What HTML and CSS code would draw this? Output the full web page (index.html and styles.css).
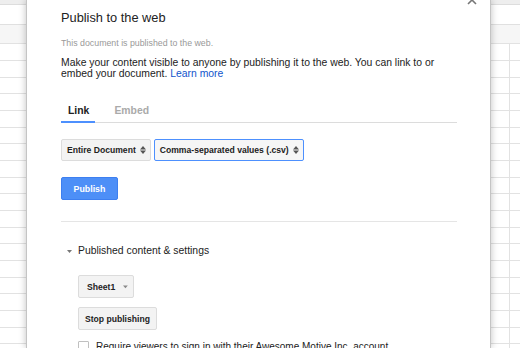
FILE: index.html
```html
<!DOCTYPE html>
<html>
<head>
<meta charset="utf-8">
<link rel="stylesheet" href="styles.css">
</head>
<body>
<div class="dialog">
  <button class="close" aria-label="Close">
    <svg width="10" height="10" viewBox="0 0 10 10"><path d="M1 1L9 9M9 1L1 9" stroke="#777" stroke-width="1.6" fill="none"/></svg>
  </button>
  <h1 class="title">Publish to the web</h1>
  <p class="status">This document is published to the web.</p>
  <p class="desc">Make your content visible to anyone by publishing it to the web. You can link to or embed your document. <a href="#" class="link">Learn more</a></p>
  <div class="tabs">
    <div class="tab active">Link</div>
    <div class="tab">Embed</div>
  </div>
  <div class="selects">
    <div class="select">Entire Document
      <svg class="updown" width="6" height="8" viewBox="0 0 6 8"><path d="M0 3.4L3 0L6 3.4Z M0 4.6L6 4.6L3 8Z" fill="#555"/></svg>
    </div>
    <div class="select focus">Comma-separated values (.csv)
      <svg class="updown" width="6" height="8" viewBox="0 0 6 8"><path d="M0 3.4L3 0L6 3.4Z M0 4.6L6 4.6L3 8Z" fill="#555"/></svg>
    </div>
  </div>
  <button class="btn primary">Publish</button>
  <div class="divider"></div>
  <div class="section-head">
    <svg class="caret" width="5" height="3" viewBox="0 0 5 3"><path d="M0 0L5 0L2.5 3Z" fill="#777"/></svg>
    <span>Published content &amp; settings</span>
  </div>
  <div class="settings">
    <div class="btn menu">Sheet1
      <svg class="drop" width="6" height="4" viewBox="0 0 6 4"><path d="M0 0L6 0L3 3.5Z" fill="#888"/></svg>
    </div>
    <button class="btn">Stop publishing</button>
    <label class="check"><span class="box"></span>Require viewers to sign in with their Awesome Motive Inc. account</label>
  </div>
</div>
</body>
</html>
```
FILE: styles.css
```css
html, body {
  margin: 0;
  padding: 0;
}
body {
  width: 520px;
  height: 348px;
  overflow: hidden;
  font-family: "Liberation Sans", Arial, sans-serif;
  color: #222;
  background:
    linear-gradient(to bottom, #eeeeee 0 4px, #dddddd 4px 5px, #ffffff 5px 24px, #e0e0e0 24px 25px, #f6f6f6 25px 43px) 0 0 / 100% 43px no-repeat,
    linear-gradient(to right, transparent 509px, #e2e2e2 509px 510px, transparent 510px) 0 0 / 100% 100% no-repeat,
    linear-gradient(to bottom, #e2e2e2 0 1px, transparent 1px 17px, #e2e2e2 17px 18px, transparent 18px 34px, #e2e2e2 34px 35px, transparent 35px 50px) 0 43px / 100% 50px repeat-y,
    #ffffff;
}
.dialog {
  position: relative;
  margin-left: 26px;
  width: 465px;
  height: 348px;
  box-sizing: border-box;
  background: #fff;
  border-left: 1px solid #c4c4c4;
  border-right: 1px solid #c4c4c4;
  box-shadow: 0 0 7px rgba(0, 0, 0, 0.25);
  padding: 10px 33px 0 34px;
  overflow: hidden;
}
.close {
  position: absolute;
  top: -5px;
  right: 13px;
  padding: 0;
  border: 0;
  background: none;
  width: 10px;
  height: 10px;
  line-height: 0;
}
.title {
  margin: 0;
  font-size: 12.8px;
  line-height: 16px;
  font-weight: normal;
  color: #222;
}
.status {
  margin: 12px 0 0;
  font-size: 8.8px;
  line-height: 11px;
  color: #999;
}
.desc {
  margin: 8px 0 0;
  font-size: 10.4px;
  line-height: 11px;
  color: #222;
}
.link {
  color: #1155cc;
  text-decoration: none;
}
.tabs {
  display: flex;
  gap: 12px;
  margin-top: 26px;
  border-bottom: 1px solid #dcdcdc;
}
.tab {
  font-size: 10.4px;
  line-height: 12px;
  font-weight: bold;
  color: #aaa;
  padding: 0 6px 4px 7px;
  border-bottom: 2px solid transparent;
  margin-bottom: -1px;
}
.tab.active {
  color: #222;
  border-bottom-color: #4d90fe;
}
.selects {
  display: flex;
  gap: 3px;
  margin-top: 16px;
}
.select {
  display: flex;
  align-items: center;
  gap: 4px;
  height: 22px;
  box-sizing: border-box;
  padding: 0 4px 0 5px;
  border: 1px solid #dcdcdc;
  border-radius: 2px;
  background: #f3f3f3;
  font-size: 8.6px;
  font-weight: bold;
  color: #222;
}
.select.focus {
  border-color: #4d90fe;
  background: #f6f6f6;
}
.updown {
  display: block;
}
.btn {
  display: flex;
  align-items: center;
  box-sizing: border-box;
  height: 23px;
  padding: 0 6px;
  border: 1px solid #dcdcdc;
  border-radius: 2px;
  background: #f3f3f3;
  font-family: "Liberation Sans", Arial, sans-serif;
  font-size: 8.6px;
  font-weight: bold;
  color: #222;
  margin: 0;
}
.btn.primary {
  margin-top: 16px;
  width: 57px;
  justify-content: center;
  background: #4d8ff7;
  border-color: #3d7ff0;
  color: #fff;
  font-size: 8.8px;
}
.divider {
  margin-top: 21px;
  height: 1px;
  background: #e5e5e5;
}
.section-head {
  display: flex;
  align-items: center;
  gap: 6px;
  margin-top: 23px;
  padding-left: 6px;
  font-size: 10.4px;
  line-height: 12px;
  color: #222;
}
.caret {
  display: block;
}
.settings {
  display: flex;
  flex-direction: column;
  align-items: flex-start;
  gap: 9px;
  margin-top: 18px;
  padding-left: 17px;
}
.btn.menu {
  gap: 8px;
  padding: 0 5px 0 8px;
  width: 56px;
  height: 23px;
}
.drop {
  display: block;
}
.check {
  display: flex;
  align-items: flex-start;
  gap: 7px;
  margin-top: 2px;
  font-size: 10px;
  line-height: 12px;
  color: #222;
}
.box {
  width: 11px;
  height: 11px;
  box-sizing: border-box;
  border: 1px solid #c0c0c0;
  border-radius: 1px;
  background: #fff;
  margin-top: 0;
}
```
